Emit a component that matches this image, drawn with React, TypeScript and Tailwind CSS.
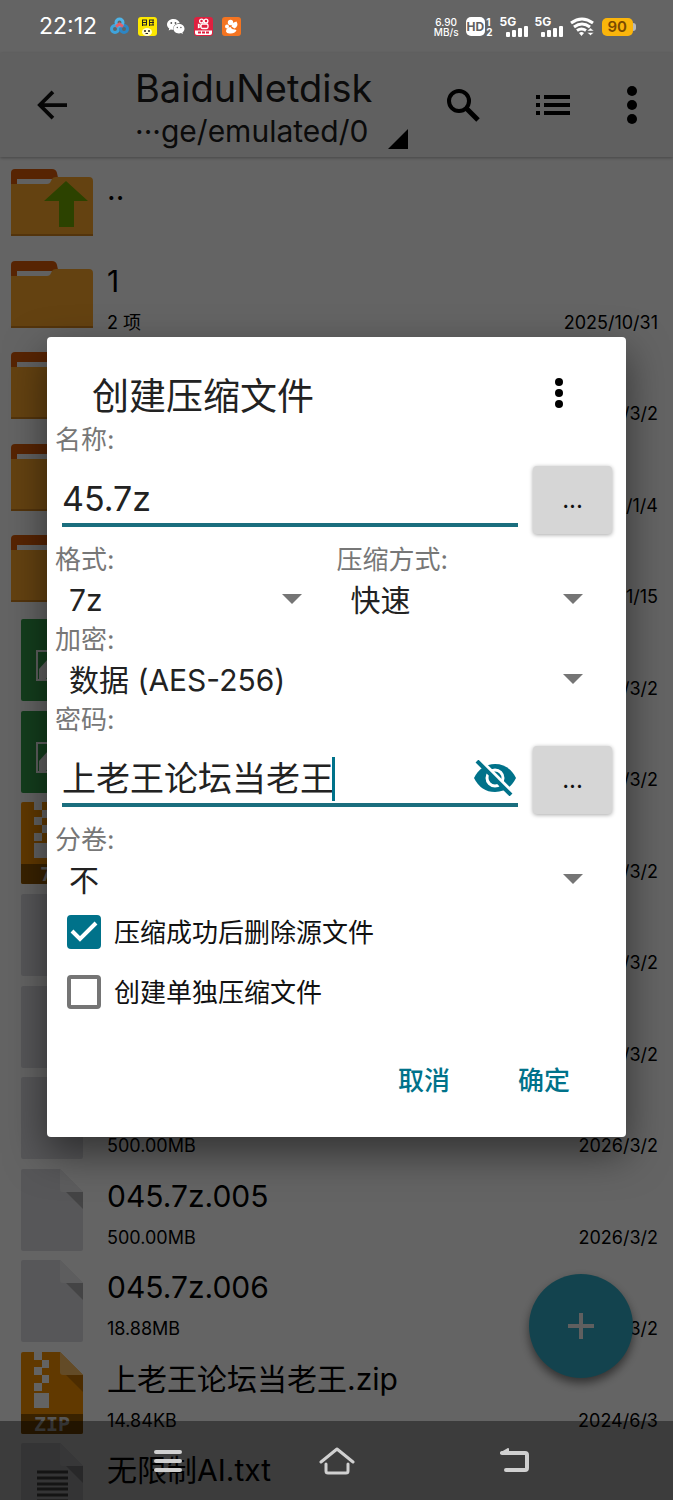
import { useState } from 'react';

type IconKind = 'up' | 'folder' | 'image' | '7z' | 'zip' | 'file' | 'txt';

interface FileItem {
  icon: IconKind;
  name?: string;
  info?: string;
  date?: string;
}

const files: FileItem[] = [
  { icon: 'up', name: '..' },
  { icon: 'folder', name: '1', info: '2 项', date: '2025/10/31' },
  { icon: 'folder', date: '2026/3/2' },
  { icon: 'folder', date: '2026/1/4' },
  { icon: 'folder', date: '2026/1/15' },
  { icon: 'image', date: '2026/3/2' },
  { icon: 'image', date: '2026/3/2' },
  { icon: '7z', date: '2026/3/2' },
  { icon: 'file', date: '2026/3/2' },
  { icon: 'file', date: '2026/3/2' },
  { icon: 'file', info: '500.00MB', date: '2026/3/2' },
  { icon: 'file', name: '045.7z.005', info: '500.00MB', date: '2026/3/2' },
  { icon: 'file', name: '045.7z.006', info: '18.88MB', date: '2026/3/2' },
  { icon: 'zip', name: '上老王论坛当老王.zip', info: '14.84KB', date: '2024/6/3' },
  { icon: 'txt', name: '无限制AI.txt' },
];

function FolderIcon({ up = false }: { up?: boolean }) {
  return (
    <svg width="82" height="67" viewBox="0 0 82 67">
      <path d="M0 18V4q0-4 4-4h37q4 0 5 4l3 14Z" fill="#d95a08" />
      <path d="M6 10h36v8H6Z" fill="#f2f2f2" />
      <path d="M0 15h36q3 0 4-3l1-2q1-2 4-2h33q4 0 4 4v55H0Z" fill="#fba62c" />
      <path d="M0 65h82v2H0Z" fill="#d08320" />
      {up && <path d="M55 12 77 32H63v26H48V32H33Z" fill="#6fa500" />}
    </svg>
  );
}

function DocIcon({ kind }: { kind: IconKind }) {
  const isArchive = kind === 'zip' || kind === '7z';
  const color = isArchive ? '#f28f00' : kind === 'image' ? '#349c4a' : '#dadade';

  return (
    <svg width="62" height="82" viewBox="0 0 62 82">
      <path d="M2 0h37l23 23v57q0 2-2 2H2q-2 0-2-2V2q0-2 2-2Z" fill={color} />
      <path d="M39 0 62 23H42q-3 0-3-3Z" fill={isArchive ? '#f8bb62' : '#e8e8ea'} />
      <path d="M45 23h17v17Z" fill="#000" opacity="0.22" />
      {kind === 'image' && (
        <g>
          <rect x="16" y="32" width="32" height="29" fill="none" stroke="#f2f2f2" strokeWidth="2" />
          <path d="M18 50 27 40l6 10-8 10h-7Z" fill="#f2f2f2" />
        </g>
      )}
      {isArchive && (
        <g>
          <path d="M13 0h8v8h-8ZM21 8h7v8h-7ZM13 15h8v8h-8ZM21 23h7v8h-7ZM13 31h8v8h-8ZM13 41h15v15H13Z" fill="#f7f7f7" />
          <path d="M0 62h62v18q0 2-2 2H2q-2 0-2-2Z" fill="#8f5500" />
          <text x="31" y="79" textAnchor="middle" fontSize="20" fontWeight="700" fill="#d8d8d8" className="font-['DejaVu_Sans_Mono',monospace]">
            {kind === 'zip' ? 'ZIP' : '7Z'}
          </text>
        </g>
      )}
      {kind === 'txt' && (
        <path d="M16 29h31M16 35h31M16 41h31M16 46h31M16 52h31M16 58h31" stroke="#555" strokeWidth="3" />
      )}
    </svg>
  );
}

function FileRow({ item }: { item: FileItem }) {
  const isFolder = item.icon === 'folder' || item.icon === 'up';

  return (
    <li className="flex min-h-0 pr-[15px]">
      <div className="flex w-[107px] shrink-0 items-center justify-center pr-[3px]">
        {isFolder ? <FolderIcon up={item.icon === 'up'} /> : <DocIcon kind={item.icon} />}
      </div>
      <div className="flex min-w-0 grow flex-col pt-3">
        <div className="h-10 truncate text-[30px] leading-10">{item.name}</div>
        <div className="mt-2 flex h-7 justify-between text-lg leading-7">
          <span>{item.info}</span>
          <span>{item.date}</span>
        </div>
      </div>
    </li>
  );
}

function SignalIcon() {
  return (
    <div className="flex w-7 flex-col">
      <span className="text-[12px] leading-[9px] font-bold">5G</span>
      <svg width="28" height="11" viewBox="0 0 28 11" fill="currentColor">
        <rect x="6" y="6" width="4" height="5" rx="1" />
        <rect x="12" y="4" width="4" height="7" rx="1" />
        <rect x="18" y="2" width="4" height="9" rx="1" />
        <rect x="24" y="0" width="4" height="11" rx="1" />
      </svg>
    </div>
  );
}

function StatusBar() {
  return (
    <div className="relative z-20 flex h-[53px] shrink-0 items-center pr-[37px] pl-[39px] text-white">
      <span className="w-[71px] text-[23px]">22:12</span>
      <div className="flex items-center gap-[9px]">
        <svg width="19" height="19" viewBox="0 0 19 19" fill="none" strokeWidth="3">
          <circle cx="5" cy="12" r="3.5" stroke="#3fa4dc" />
          <circle cx="14" cy="12" r="3.5" stroke="#2d86c4" />
          <circle cx="9.500" cy="5.500" r="3.500" stroke="#4fb4e8" />
          <path d="M6 9.500 9.500 7l3.500 2.500" stroke="#e0606a" />
        </svg>
        <svg width="19" height="19" viewBox="0 0 19 19">
          <rect width="19" height="19" rx="3" fill="#fde800" />
          <path d="M4 3h5M4 5.500h5M4 8h5M4.500 3v6M8.500 3v5M11 3h5M11 5.500h5M11 8h5M11.500 3v6M15 3v5" stroke="#222" />
          <ellipse cx="9" cy="15" rx="5" ry="4" fill="#fffbd0" />
          <circle cx="7" cy="14" r="1" fill="#222" />
          <circle cx="11" cy="14" r="1" fill="#222" />
          <path d="M7.500 16.500h2.500" stroke="#222" />
        </svg>
        <svg width="19" height="19" viewBox="0 0 19 19" fill="#fff">
          <path d="M7.500 2C3.500 2 1 4.600 1 7.500c0 1.700.9 3.100 2.300 4.100L2.700 13.500l2.200-1.100c.9.200 1.700.3 2.600.3C6.500 8.500 10 6 13.800 6.200 13 3.700 10.600 2 7.500 2Z" />
          <path d="M13 7c-3.200 0-5.500 2.100-5.500 4.700S9.800 16.400 13 16.400c.7 0 1.400-.1 2-.3l1.900 1-.5-1.700c1.300-.9 2.100-2.200 2.100-3.700C18.500 9.100 16 7 13 7Z" />
          <g fill="#555">
            <circle cx="5.300" cy="6" r="0.900" />
            <circle cx="9.500" cy="6" r="0.900" />
            <circle cx="11.300" cy="10.500" r="0.700" />
            <circle cx="14.900" cy="10.500" r="0.700" />
          </g>
        </svg>
        <svg width="19" height="19" viewBox="0 0 19 19">
          <rect width="19" height="19" rx="3" fill="#e0203f" />
          <g fill="none" stroke="#fff" strokeWidth="1.300">
            <circle cx="7.500" cy="4" r="1.900" />
            <circle cx="12" cy="4" r="1.900" />
            <rect x="7" y="7" width="7" height="4.500" rx="1.500" />
            <path d="M7 8.500 4.500 7.500v3L7 9.500" />
          </g>
          <path d="M1 13.500h17V16q0 2-2 2H3q-2 0-2-2Z" fill="#fff" />
          <path d="M4 15.500h11" stroke="#e0203f" strokeWidth="2" strokeDasharray="3 1" />
        </svg>
        <svg width="19" height="19" viewBox="0 0 19 19">
          <rect width="19" height="19" rx="3" fill="#f47421" />
          <g fill="#fff">
            <circle cx="8.500" cy="5.500" r="2.700" />
            <path d="M9.500 9.500q0-4 5-5 2.500 4.500-2 7Z" />
            <circle cx="5" cy="9.500" r="2" />
            <path d="M4 14.500q0-4 4.500-4.500 1 2.500 4 2.500 1.500 0 2 1-2 3.500-7 3-3 0-3.500-2Z" />
          </g>
        </svg>
      </div>
      <div className="ml-auto flex items-center gap-[7px]">
        <div className="text-center text-[10px] leading-[10px] font-medium">
          6.90
          <br />
          MB/s
        </div>
        <div className="flex items-center gap-px">
          <span className="rounded-[5px] bg-white px-px text-[12px] leading-[19px] font-bold text-[#5f5f5f]">HD</span>
          <span className="flex flex-col text-[10px] leading-[10px] font-bold">
            <span>1</span>
            <span>2</span>
          </span>
        </div>
        <SignalIcon />
        <SignalIcon />
        <svg width="25" height="19" viewBox="0 0 25 19" fill="none" stroke="#fff" strokeWidth="3">
          <path d="M1 6q11-8 22 0M4 10q8-6 16 0" />
          <path d="M7 13.500q4.500-3 9 0" />
          <path d="M9 16q2.500-2 5 0l-2.500 3Z" fill="#fff" stroke="none" />
          <path d="m17 14 3.500-3 3.500 3ZM17 15.500l3.500 3 3.500-3Z" fill="#fff" stroke="#606060" strokeWidth="0.500" />
        </svg>
        <div className="flex items-center">
          <span className="rounded-[5px] bg-[#fbb50b] px-[6px] text-[15px] leading-[18px] font-semibold text-[#7a4a00]">90</span>
          <span className="h-2 w-[3px] rounded-r-full bg-[#b9b9b9]" />
        </div>
      </div>
    </div>
  );
}

function Toolbar() {
  return (
    <header className="flex h-[104px] shrink-0 items-center bg-[#f0f0f0] pr-[35px] pl-[37px] shadow-[0_1px_3px_rgba(0,0,0,0.3)]">
      <button type="button" aria-label="返回" className="w-[98px] shrink-0">
        <svg width="30" height="30" viewBox="0 0 32 32" fill="none" stroke="#111" strokeWidth="4">
          <path d="M32 16H4M17 2 3 16l14 14" />
        </svg>
      </button>
      <div className="flex min-w-0 grow items-end pt-[6px]">
        <div className="text-[#1c1c1c]">
          <h1 className="text-[38px] leading-[46px]">BaiduNetdisk</h1>
          <p className="text-[30px] leading-10">···ge/emulated/0</p>
        </div>
        <svg width="20" height="20" viewBox="0 0 20 20" className="mb-0.5 ml-4 shrink-0">
          <path d="M20 0v20H0Z" />
        </svg>
      </div>
      <div className="flex shrink-0 items-center gap-14">
        <button type="button" aria-label="搜索">
          <svg width="34" height="34" viewBox="0 0 34 34" fill="none" stroke="#000" strokeWidth="4">
            <circle cx="13" cy="13" r="10" />
            <path d="m20 20 12 12" strokeWidth="5" />
          </svg>
        </button>
        <button type="button" aria-label="列表">
          <svg width="34" height="20" viewBox="0 0 34 20">
            <path d="M0 0h4v4H0ZM8 0h26v4H8ZM0 8h4v4H0ZM8 8h26v4H8ZM0 16h4v4H0ZM8 16h26v4H8Z" />
          </svg>
        </button>
        <button type="button" aria-label="更多">
          <svg width="12" height="38" viewBox="0 0 12 38">
            <circle cx="6" cy="5" r="5" />
            <circle cx="6" cy="19" r="5" />
            <circle cx="6" cy="33" r="5" />
          </svg>
        </button>
      </div>
    </header>
  );
}

interface SelectFieldProps {
  id: string;
  label: string;
  value: string;
}

function SelectField({ id, label, value }: SelectFieldProps) {
  return (
    <div>
      <label htmlFor={id} className="block text-[26px] leading-10 text-[#777]">{label}</label>
      <div className="relative">
        <select id={id} defaultValue={value} className="block h-10 w-full appearance-none pl-[14px] text-[30px] leading-10 text-[#222] outline-none">
          <option>{value}</option>
        </select>
        <svg width="20" height="10" viewBox="0 0 20 10" className="pointer-events-none absolute top-[14px] right-[35px]">
          <path d="M0 0h20L10 10Z" fill="#757575" />
        </svg>
      </div>
    </div>
  );
}

function MoreButton({ label }: { label: string }) {
  return (
    <button type="button" aria-label={label} className="h-[68px] w-[79px] shrink-0 rounded bg-[#d6d6d6] text-[24px] text-[#111] shadow-[0_1px_4px_rgba(0,0,0,0.35)]">
      ...
    </button>
  );
}

interface CheckFieldProps {
  label: string;
  checked: boolean;
  onChange: (value: boolean) => void;
}

function CheckField({ label, checked, onChange }: CheckFieldProps) {
  return (
    <label className="flex h-15 items-center gap-[13px] pl-3 text-[26px] text-[#111]">
      <span className="grid">
        <input
          type="checkbox"
          checked={checked}
          onChange={e => onChange(e.target.checked)}
          className="col-start-1 row-start-1 size-[34px] appearance-none rounded border-4 border-[#757575] checked:border-[#00728a] checked:bg-[#00728a]"
        />
        {checked && (
          <svg width="34" height="34" viewBox="0 0 34 34" fill="none" stroke="#fff" strokeWidth="4" className="pointer-events-none col-start-1 row-start-1">
            <path d="m5 16 8 8L29 8" />
          </svg>
        )}
      </span>
      {label}
    </label>
  );
}

function ArchiveDialog() {
  const [name, setName] = useState('45.7z');
  const [password, setPassword] = useState('上老王论坛当老王');
  const [deleteSource, setDeleteSource] = useState(true);
  const [separate, setSeparate] = useState(false);

  return (
    <div role="dialog" aria-labelledby="dialog-title" className="w-full rounded bg-white px-2 pb-[27px] shadow-[0_16px_40px_rgba(0,0,0,0.5)]">
      <div className="flex h-[83px] items-center justify-between pt-7 pr-[54px] pl-[37px]">
        <h2 id="dialog-title" className="mt-2 text-[37px] text-[#222]">创建压缩文件</h2>
        <button type="button" aria-label="更多选项">
          <svg width="10" height="30" viewBox="0 0 10 30">
            <circle cx="5" cy="4" r="4" />
            <circle cx="5" cy="15" r="4" />
            <circle cx="5" cy="26" r="4" />
          </svg>
        </button>
      </div>

      <label htmlFor="name" className="block text-[26px] leading-10 text-[#777]">名称:</label>
      <div className="flex h-20 items-center gap-[15px] pr-[6px] pl-[7px]">
        <input
          id="name"
          value={name}
          onChange={e => setName(e.target.value)}
          className="h-[54px] min-w-0 grow border-b-4 border-[#1a6e7e] text-[34px] text-[#222] outline-none"
        />
        <MoreButton label="选择路径" />
      </div>

      <div className="grid grid-cols-2">
        <SelectField id="format" label="格式:" value="7z" />
        <SelectField id="level" label="压缩方式:" value="快速" />
      </div>
      <SelectField id="encryption" label="加密:" value="数据 (AES-256)" />

      <label htmlFor="password" className="block text-[26px] leading-10 text-[#777]">密码:</label>
      <div className="flex h-20 items-center gap-[15px] pr-[6px] pl-[7px]">
        <div className="relative flex h-[54px] min-w-0 grow items-center border-b-4 border-[#1a6e7e]">
          <input
            id="password"
            value={password}
            onChange={e => setPassword(e.target.value)}
            className="min-w-0 grow text-[34px] text-[#222] outline-none"
          />
          <span className="absolute top-1 left-[270px] h-11 w-[3px] bg-[#00728a]" />
          <button type="button" aria-label="隐藏密码" className="mr-[2px] shrink-0">
            <svg width="42" height="36" viewBox="0 0 42 36" fill="none">
              <path d="M0 18Q7 4 21 4t21 14Q35 32 21 32T0 18Z" fill="#00728a" />
              <circle cx="21" cy="18" r="8" stroke="#fff" strokeWidth="3" />
              <path d="M6 0 40 34" stroke="#fff" strokeWidth="4" />
              <path d="M3 1 37 35" stroke="#00728a" strokeWidth="4" />
            </svg>
          </button>
        </div>
        <MoreButton label="密码管理" />
      </div>

      <SelectField id="split" label="分卷:" value="不" />

      <div className="pt-[2px]">
        <CheckField label="压缩成功后删除源文件" checked={deleteSource} onChange={setDeleteSource} />
        <CheckField label="创建单独压缩文件" checked={separate} onChange={setSeparate} />
      </div>

      <div className="mt-7 flex h-15 items-center justify-end gap-[68px] pr-12 text-[26px] font-medium text-[#00728a]">
        <button type="button">取消</button>
        <button type="button">确定</button>
      </div>
    </div>
  );
}

function NavBar() {
  return (
    <nav className="absolute inset-x-0 bottom-0 z-20 flex h-[79px] items-center justify-center gap-[136px] bg-black/40 pl-4">
      <button type="button" aria-label="最近任务">
        <svg width="30" height="24" viewBox="0 0 30 24" stroke="#d0d0d0" strokeWidth="4" strokeLinecap="round">
          <path d="M3 3h24M3 12h24M3 21h24" />
        </svg>
      </button>
      <button type="button" aria-label="主页">
        <svg width="36" height="28" viewBox="0 0 36 28" fill="none" stroke="#d0d0d0" strokeWidth="3" strokeLinecap="round" strokeLinejoin="round">
          <path d="M2 15 18 2l16 13" />
          <path d="M7 17v7q0 2 2 2h18q2 0 2-2v-7" />
        </svg>
      </button>
      <button type="button" aria-label="返回上一页" className="flex w-[46px] justify-center">
        <svg width="30" height="26" viewBox="0 0 30 26" fill="none" stroke="#d0d0d0" strokeWidth="4" strokeLinecap="round" strokeLinejoin="round">
          <path d="M3 5h23q2 0 2 2v13q0 2-2 2H7" />
          <path d="M2 5 9 1v4Z" strokeWidth="2" fill="#d0d0d0" />
        </svg>
      </button>
    </nav>
  );
}

export default function App() {
  return (
    <div className="relative flex h-screen flex-col overflow-hidden bg-[#fafafa] font-[Inter,'Noto_Sans_CJK_SC',sans-serif] text-black">
      <StatusBar />
      <Toolbar />
      <ul className="grid h-[1373px] shrink-0 auto-rows-fr">
        {files.map((item, i) => (
          <FileRow key={i} item={item} />
        ))}
      </ul>

      <button type="button" aria-label="新建" className="absolute right-10 bottom-[122px] flex size-[104px] items-center justify-center rounded-full bg-[#30a9c2] shadow-[0_5px_10px_rgba(0,0,0,0.5)]">
        <svg width="26" height="26" viewBox="0 0 26 26" stroke="#eee" strokeWidth="4">
          <path d="M13 0v26M0 13h26" />
        </svg>
      </button>

      <div className="absolute inset-0 z-10 flex items-center bg-black/60 px-[47px] pb-[26px]">
        <ArchiveDialog />
      </div>
      <NavBar />
    </div>
  );
}
